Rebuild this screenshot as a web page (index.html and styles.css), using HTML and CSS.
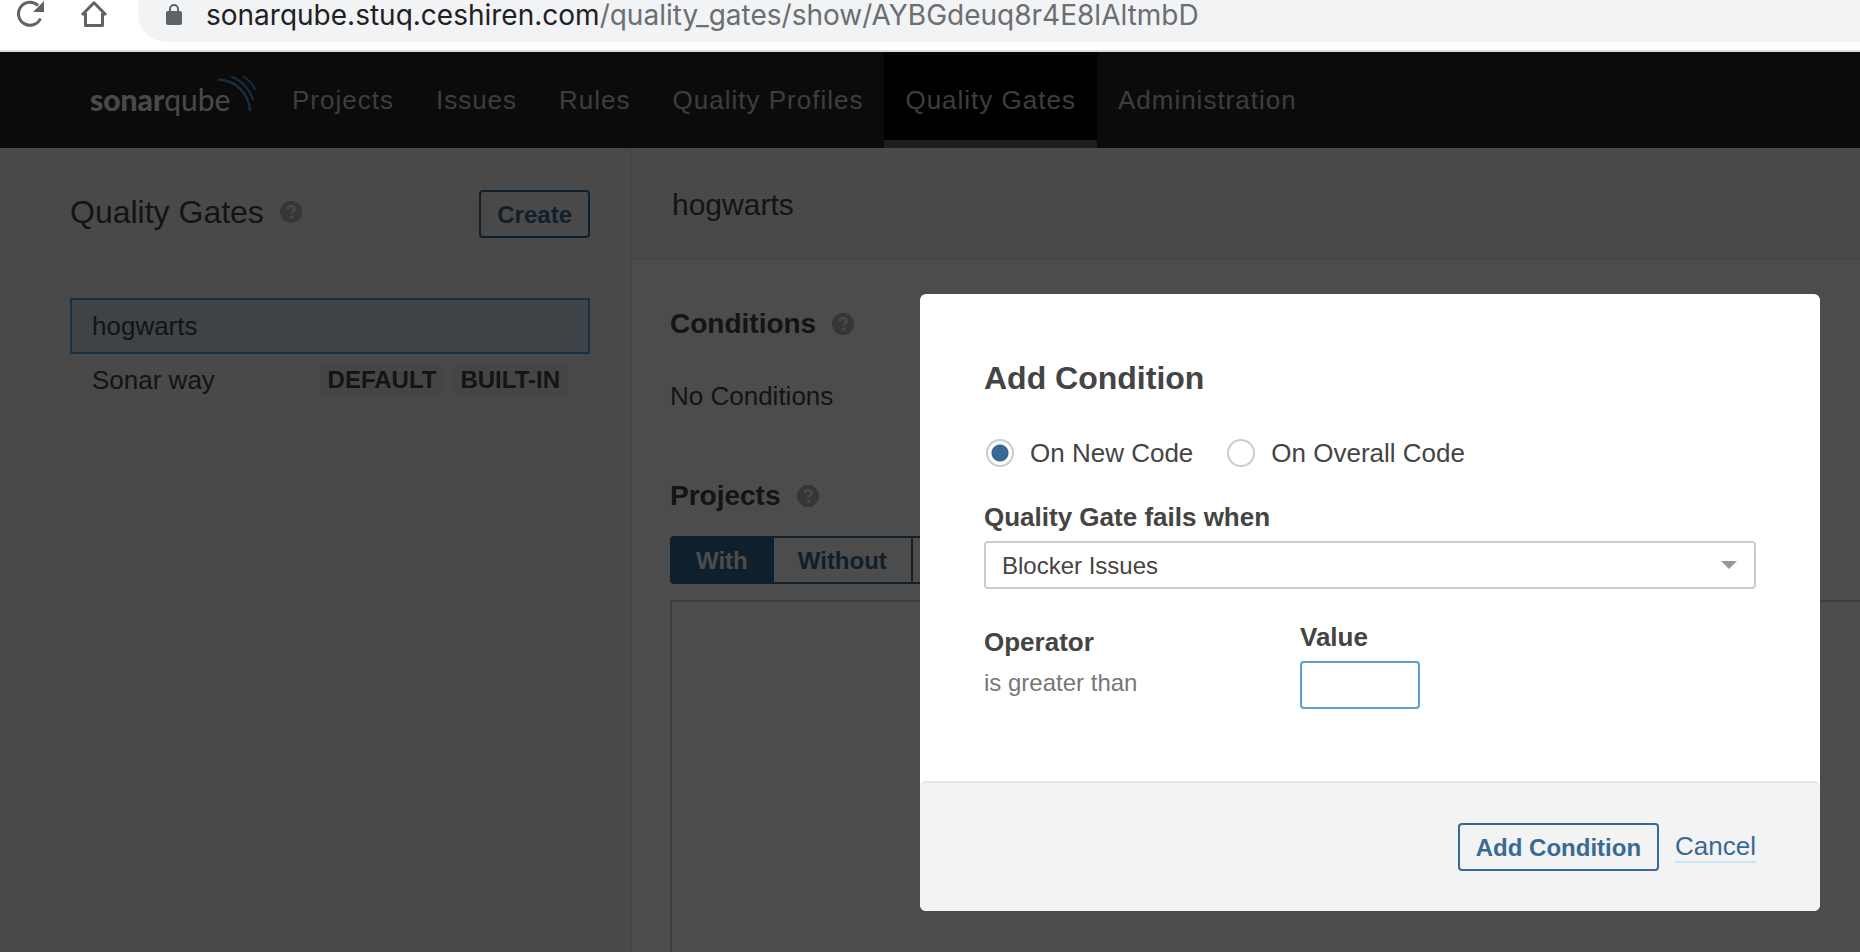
FILE: index.html
```html
<!DOCTYPE html>
<html lang="en">
<head>
<meta charset="utf-8">
<title>Quality Gates</title>
<link rel="stylesheet" href="styles.css">
</head>
<body>
<svg class="sprite" aria-hidden="true">
  <symbol id="help" viewBox="0 0 22 22">
    <circle cx="11" cy="11" r="11" fill="currentColor"/>
    <path d="M7.6 8.2C7.8 6 9.2 5 11.100 5c2 0 3.500 1.200 3.500 3 0 2.300-2.800 2.400-2.800 4.600" fill="none" stroke="var(--help-mark)" stroke-width="2.600"/>
    <rect x="10.200" y="14.600" width="3" height="3" fill="var(--help-mark)"/>
  </symbol>
</svg>

<div class="browser-bar">
  <button class="browser-button" type="button" aria-label="Reload">
    <svg width="28" height="28" viewBox="0 0 28 28"><path d="M24.500 18.500A11.500 11.500 0 1 1 22 5.500" fill="none" stroke="#5f6368" stroke-width="3"/><path d="M28 1v11H17z" fill="#5f6368"/></svg>
  </button>
  <button class="browser-button" type="button" aria-label="Home">
    <svg width="28" height="28" viewBox="0 0 28 28"><path d="M2 15 14 2.800 26 15M5.500 13v12.500h17V13" fill="none" stroke="#5f6368" stroke-width="3" stroke-linejoin="round"/></svg>
  </button>
  <div class="address">
    <svg width="16" height="22" viewBox="0 0 16 22"><rect y="7" width="16" height="14" rx="2" fill="#5f6368"/><path d="M4 8V5a4 4 0 0 1 8 0v3" fill="none" stroke="#5f6368" stroke-width="2"/></svg>
    <span class="address-text">sonarqube.stuq.ceshiren.com<span class="address-path">/quality_gates/show/AYBGdeuq8r4E8lAltmbD</span></span>
  </div>
</div>

<div class="app">
  <nav class="navbar">
    <a class="logo" href="#"><b>sonar</b>qube<svg class="logo-waves" width="40" height="38" viewBox="0 0 40 38"><path d="M1 4.500C18 5 32 18 33 36" stroke-width="2.400"/><path d="M14 1.500C24 5 33 14 36 25" stroke-width="2"/><path d="M25.500 1C31 4 36 9.500 38.500 15" stroke-width="1.600"/></svg></a>
    <a class="nav-item" href="#">Projects</a>
    <a class="nav-item" href="#">Issues</a>
    <a class="nav-item" href="#">Rules</a>
    <a class="nav-item" href="#">Quality Profiles</a>
    <a class="nav-item active" href="#">Quality Gates</a>
    <a class="nav-item" href="#">Administration</a>
  </nav>

  <div class="columns">
    <aside class="sidebar">
      <header class="sidebar-head">
        <h1 class="sidebar-title">Quality Gates</h1>
        <svg class="help"><use href="#help"/></svg>
        <button class="button push" type="button">Create</button>
      </header>
      <div class="gates">
        <a class="gate selected" href="#">hogwarts</a>
        <a class="gate" href="#">Sonar way <span class="badges"><span class="badge">DEFAULT</span><span class="badge">BUILT-IN</span></span></a>
      </div>
    </aside>
    <main class="main">
      <header class="main-head"><h2 class="main-title">hogwarts</h2></header>
      <div class="main-body">
        <section class="section">
          <h3 class="section-title">Conditions <svg class="help"><use href="#help"/></svg></h3>
          <p class="empty">No Conditions</p>
        </section>
        <section class="section projects">
          <h3 class="section-title">Projects <svg class="help"><use href="#help"/></svg></h3>
          <div class="toggle">
            <button class="toggle-item on" type="button">With</button><button class="toggle-item" type="button">Without</button><button class="toggle-item" type="button">All</button>
          </div>
          <div class="project-list"></div>
        </section>
      </div>
    </main>
  </div>

  <div class="overlay">
    <form class="modal" role="dialog" aria-labelledby="dialog-title">
      <div class="modal-body">
        <h2 class="modal-title" id="dialog-title">Add Condition</h2>
        <div class="radios">
          <label class="radio-label"><input class="radio" type="radio" name="scope" checked>On New Code</label>
          <label class="radio-label"><input class="radio" type="radio" name="scope">On Overall Code</label>
        </div>
        <label class="field-label" for="metric">Quality Gate fails when</label>
        <div class="select-wrap">
          <select class="select" id="metric"><option>Blocker Issues</option></select>
        </div>
        <div class="fields">
          <div class="operator">
            <span class="field-label">Operator</span>
            <span class="note">is greater than</span>
          </div>
          <div class="value">
            <label class="field-label" for="value">Value</label>
            <input class="value-input" id="value" type="text">
          </div>
        </div>
      </div>
      <footer class="modal-foot">
        <button class="button" type="button">Add Condition</button>
        <a class="cancel" href="#">Cancel</a>
      </footer>
    </form>
  </div>
</div>
</body>
</html>
```
FILE: styles.css
```css
* { box-sizing: border-box; }

:root {
  --blue: #386a94;
  --sky: #5d9dd5;
  --help-mark: #f3f3f3;
}

body {
  margin: 0;
  height: 100vh;
  display: flex;
  flex-direction: column;
  overflow: hidden;
  background: #fff;
  color: #444;
  font: 26px/32px "Liberation Sans", Arial, sans-serif;
}

h1, h2, h3, p { margin: 0; }
a { color: inherit; text-decoration: none; }
button, input, select { font: inherit; color: inherit; }
.sprite { position: absolute; width: 0; height: 0; }

/* Browser toolbar */
.browser-bar {
  flex: none;
  display: flex;
  height: 52px;
  padding-left: 16px;
  border-bottom: 2px solid #dcdcdc;
}
.browser-button {
  width: 28px;
  height: 28px;
  padding: 0;
  margin-right: 36px;
  border: 0;
  background: none;
}
.browser-button svg { display: block; }
.browser-button + .browser-button { margin-right: 30px; }
.address {
  flex: 1;
  display: flex;
  align-items: flex-start;
  gap: 24px;
  height: 42px;
  padding-left: 28px;
  border-radius: 0 0 0 28px;
  background: #f1f3f4;
  color: #202124;
  font: 28px/30px Inter, sans-serif;
  white-space: nowrap;
}
.address svg { margin-top: 4px; }
.address-path { color: #6b6e72; }

/* Application */
.app {
  position: relative;
  flex: 1;
  min-height: 0;
  display: flex;
  flex-direction: column;
}
.navbar {
  flex: none;
  display: flex;
  height: 96px;
  padding-left: 90px;
  background: #262626;
  color: #ccc;
  white-space: nowrap;
}
.logo {
  position: relative;
  width: 181px;
  color: #f5f5f5;
  font: 400 30px/94px Lato, sans-serif;
}
.logo b { font-weight: 900; }
.logo-waves {
  position: absolute;
  left: 127px;
  top: 23px;
  fill: none;
  stroke: #4b9fd5;
}
.nav-item {
  padding: 0 21px;
  line-height: 96px;
  letter-spacing: 1px;
}
.nav-item.active {
  background: #000;
  border-bottom: 8px solid #646464;
}

.columns { flex: 1; min-height: 0; display: flex; }
.sidebar {
  flex: 0 0 632px;
  padding: 42px 40px 0 70px;
  background: #f3f3f3;
  border-right: 2px solid #e6e6e6;
}
.sidebar-head { display: flex; align-items: flex-start; }
.sidebar-title { font-size: 32px; line-height: 44px; font-weight: 400; }
.help { width: 22px; height: 22px; color: #b4b4b4; }
.sidebar-head .help { margin: 11px 0 0 16px; }
.push { margin-left: auto; }
.button {
  height: 48px;
  padding: 2px 16px 0;
  border: 2px solid var(--blue);
  border-radius: 4px;
  background: none;
  color: var(--blue);
  font-size: 24px;
  font-weight: 700;
}
.gates { margin-top: 60px; }
.gate {
  display: flex;
  align-items: center;
  height: 56px;
  padding: 0 20px;
  border: 2px solid transparent;
}
.gate + .gate { height: 52px; }
.gate.selected { background: #cbdfed; border-color: var(--sky); }
.badges { display: flex; gap: 8px; margin-left: auto; }
.badge {
  padding: 0 8px;
  border-radius: 6px;
  background: #e6e6e6;
  font-size: 24px;
  font-weight: 700;
}

.main { flex: 1; display: flex; flex-direction: column; min-width: 0; }
.main-head {
  padding: 40px 40px 36px;
  background: #f3f3f3;
  border-bottom: 2px solid #e6e6e6;
}
.main-title { font-size: 30px; line-height: 34px; font-weight: 400; }
.main-body {
  flex: 1;
  display: flex;
  flex-direction: column;
  padding: 48px 0 0 38px;
}
.section-title {
  display: flex;
  align-items: center;
  gap: 16px;
  font-size: 28px;
}
.empty { margin-top: 40px; }
.projects {
  flex: 1;
  display: flex;
  flex-direction: column;
  margin-top: 68px;
}
.toggle { display: flex; margin-top: 24px; }
.toggle-item {
  height: 48px;
  padding: 2px 24px 0;
  border: 2px solid var(--blue);
  border-left-width: 0;
  background: none;
  color: var(--blue);
  font-size: 24px;
  font-weight: 700;
}
.toggle-item:first-child { border-left-width: 2px; border-radius: 4px 0 0 4px; }
.toggle-item:last-child { border-radius: 0 4px 4px 0; }
.toggle-item.on { background: var(--blue); color: #fff; }
.project-list {
  flex: 1;
  margin-top: 16px;
  border: 2px solid #c8c8c8;
  border-width: 2px 0 0 2px;
}

/* Dialog */
.overlay {
  position: absolute;
  inset: 0;
  display: flex;
  justify-content: flex-end;
  align-items: flex-start;
  padding: 242px 40px 0;
  background: rgba(0, 0, 0, 0.7);
}
.modal {
  width: 900px;
  max-width: 100%;
  border-radius: 6px;
  background: #fff;
}
.modal-body { padding: 68px 64px 72px; }
.modal-title { font-size: 32px; }
.radios { display: flex; gap: 34px; margin: 43px 0 32px; padding-left: 2px; }
.radio-label { display: flex; align-items: center; gap: 16px; }
.radio {
  appearance: none;
  width: 28px;
  height: 28px;
  margin: 0;
  border: 2px solid #ccc;
  border-radius: 50%;
}
.radio:checked { background: radial-gradient(circle, var(--blue) 8px, transparent 9px); }
.field-label { display: block; font-weight: 700; }
.select-wrap { position: relative; margin-top: 8px; }
.select-wrap::after {
  content: "";
  position: absolute;
  right: 19px;
  top: 20px;
  border: 8px solid transparent;
  border-top-color: #999;
  border-bottom: 0;
  pointer-events: none;
}
.select {
  appearance: none;
  display: block;
  width: 100%;
  height: 48px;
  padding: 2px 16px 0;
  border: 2px solid #ccc;
  border-radius: 4px;
  background: #fff;
  font-size: 24px;
}
.fields { display: grid; grid-template-columns: 316px 1fr; margin-top: 32px; }
.operator { padding-top: 5px; }
.note {
  display: block;
  margin-top: 9px;
  color: #777;
  font-size: 24px;
}
.value-input {
  display: block;
  width: 120px;
  height: 48px;
  margin-top: 8px;
  padding: 0 12px;
  border: 2px solid var(--sky);
  border-radius: 4px;
  outline: 0;
}
.modal-foot {
  display: flex;
  justify-content: flex-end;
  align-items: center;
  gap: 16px;
  padding: 40px 64px;
  border-top: 2px solid #e6e6e6;
  border-radius: 6px;
  background: #f3f3f3;
}
.cancel {
  line-height: 30px;
  color: var(--blue);
  border-bottom: 2px solid #cae3f2;
}
```
